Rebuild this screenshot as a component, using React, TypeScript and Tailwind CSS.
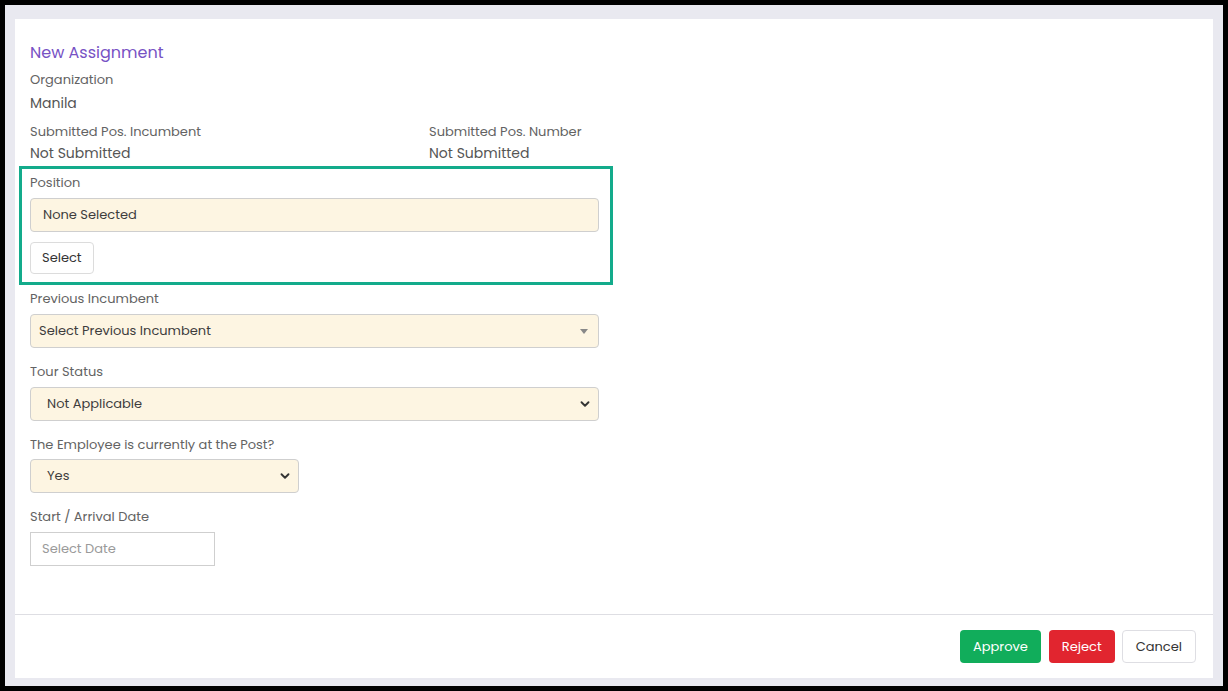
import { ChevronDown } from "lucide-react";

const font = { fontFamily: '"Poppins", "Inter", "Liberation Sans", sans-serif' };

function Label({ children, className = "" }: { children: React.ReactNode; className?: string }) {
  return <div className={`text-[13px] leading-5 text-[#636363] ${className}`}>{children}</div>;
}

function CreamSelect({
  value,
  width,
  caret,
  padLeft,
}: {
  value: string;
  width: string;
  caret: "triangle" | "chevron";
  padLeft: string;
}) {
  return (
    <div
      className={`flex h-[34px] ${width} items-center justify-between rounded-[4px] border border-[#cfcfcf] bg-[#fdf5e2] ${padLeft} ${
        caret === "triangle" ? "pr-[10px]" : "pr-[6px]"
      } text-[13px] text-[#3d3d3d]`}
    >
      <span>{value}</span>
      {caret === "triangle" ? (
        <span className="h-0 w-0 border-x-[4px] border-t-[5px] border-x-transparent border-t-[#888]" />
      ) : (
        <ChevronDown size={14} strokeWidth={3.2} className="text-[#333]" />
      )}
    </div>
  );
}

export default function App() {
  return (
    <div className="h-[691px] w-[1228px] bg-black p-[5px]" style={font}>
      <div className="flex h-full flex-col bg-[#e9e9f0] pb-[8px] pl-[10px] pr-[10px] pt-[14px]">
        <div className="flex flex-1 flex-col bg-white">
          <div className="flex-1 px-[15px] pt-[22px]">
            <div className="text-[16px] leading-6 text-[#7752c4]">New Assignment</div>

            <Label className="mt-[5px]">Organization</Label>
            <div className="mt-[3px] text-[14px] leading-[21px] text-[#555]">Manila</div>

            <div className="mt-[8px] flex">
              <div className="w-[399px]">
                <Label>Submitted Pos. Incumbent</Label>
                <div className="mt-[1px] text-[14px] leading-[21px] text-[#555]">Not Submitted</div>
              </div>
              <div>
                <Label>Submitted Pos. Number</Label>
                <div className="mt-[1px] text-[14px] leading-[21px] text-[#555]">Not Submitted</div>
              </div>
            </div>

            <div className="-ml-[11px] mt-[2px] w-[594px] border-[3px] border-[#13ab8b] pb-[8px] pl-[8px] pr-[11px] pt-[4px]">
              <Label>Position</Label>
              <div className="mt-[5px] flex h-[34px] items-center rounded-[4px] border border-[#cfcfcf] bg-[#fdf5e2] px-[12px] text-[13px] text-[#3d3d3d]">
                None Selected
              </div>
              <button className="mt-[10px] h-[32px] rounded-[4px] border border-[#dcdcdc] bg-white px-[11px] text-[13px] text-[#333]">
                Select
              </button>
            </div>

            <Label className="mt-[4px]">Previous Incumbent</Label>
            <div className="mt-[5px]">
              <CreamSelect value="Select Previous Incumbent" width="w-[569px]" caret="triangle" padLeft="pl-[8px]" />
            </div>

            <Label className="mt-[14px]">Tour Status</Label>
            <div className="mt-[5px]">
              <CreamSelect value="Not Applicable" width="w-[569px]" caret="chevron" padLeft="pl-[16px]" />
            </div>

            <Label className="mt-[14px]">The Employee is currently at the Post?</Label>
            <div className="mt-[4px]">
              <CreamSelect value="Yes" width="w-[269px]" caret="chevron" padLeft="pl-[16px]" />
            </div>

            <Label className="mt-[14px]">Start / Arrival Date</Label>
            <div className="mt-[5px] flex h-[34px] w-[185px] items-center border border-[#cfcfcf] bg-white px-[11px] text-[13px] text-[#9a9a9a]">
              Select Date
            </div>
          </div>

          <div className="flex h-[64px] items-center justify-end border-t border-[#dedee3] pr-[17px]">
            <button className="h-[33px] rounded-[4px] bg-[#11ad5b] px-[13px] text-[13px] text-white">Approve</button>
            <button className="ml-[8px] h-[33px] rounded-[4px] bg-[#e1252f] px-[13px] text-[13px] text-white">Reject</button>
            <button className="ml-[7px] h-[33px] rounded-[4px] border border-[#dedee3] bg-white px-[13px] text-[13px] text-[#333]">
              Cancel
            </button>
          </div>
        </div>
      </div>
    </div>
  );
}
